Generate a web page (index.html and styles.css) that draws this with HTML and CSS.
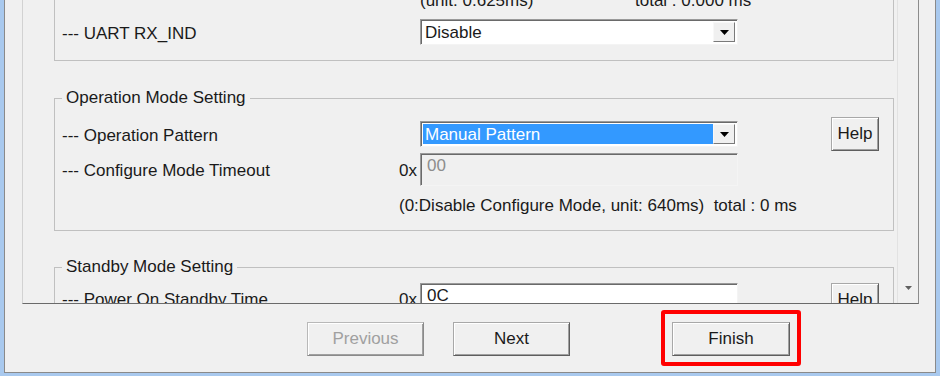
FILE: index.html
```html
<!DOCTYPE html>
<html lang="en">
<head>
    <meta charset="UTF-8">
    <meta name="viewport" content="width=device-width, initial-scale=1.0">
    <title>Setting Wizard</title>
    <link rel="stylesheet" href="styles.css">
</head>
<body>
    <div class="window">
        <div class="dialog">
            <div class="scroll">
                <div class="scroll-content">
                    <fieldset class="group group-cut">
                        <div class="row row-note">
                            <span class="note"><span class="unit">(unit: 0.625ms)</span>total : 0.000 ms</span>
                        </div>
                        <div class="row row-combo">
                            <span class="label">--- UART RX_IND</span>
                            <div class="combo">
                                <span class="combo-value">Disable</span>
                                <span class="combo-btn"><svg width="9" height="5" viewBox="0 0 9 5"><polygon points="0,0 9,0 4.5,5" fill="#000"/></svg></span>
                            </div>
                        </div>
                    </fieldset>

                    <fieldset class="group">
                        <legend>Operation Mode Setting</legend>
                        <div class="row row-first">
                            <span class="label">--- Operation Pattern</span>
                            <div class="combo">
                                <span class="combo-value selected">Manual Pattern</span>
                                <span class="combo-btn"><svg width="9" height="5" viewBox="0 0 9 5"><polygon points="0,0 9,0 4.5,5" fill="#000"/></svg></span>
                            </div>
                            <button class="btn btn-help">Help</button>
                        </div>
                        <div class="row row-edit">
                            <span class="label">--- Configure Mode Timeout</span>
                            <span class="prefix">0x</span>
                            <div class="edit disabled">00</div>
                        </div>
                        <div class="row row-desc">
                            <span class="desc">(0:Disable Configure Mode, unit: 640ms)&nbsp; total : 0 ms</span>
                        </div>
                    </fieldset>

                    <fieldset class="group group-standby">
                        <legend>Standby Mode Setting</legend>
                        <div class="row row-standby">
                            <span class="label">--- Power On Standby Time</span>
                            <span class="prefix">0x</span>
                            <div class="edit">0C</div>
                            <button class="btn btn-help">Help</button>
                        </div>
                    </fieldset>
                </div>
                <div class="scrollbar">
                    <span class="scroll-arrow"><svg width="7" height="4" viewBox="0 0 7 4"><polygon points="0,0 7,0 3.5,4" fill="#606060"/></svg></span>
                </div>
            </div>

            <div class="button-bar">
                <button class="btn btn-nav" disabled>Previous</button>
                <button class="btn btn-nav btn-next">Next</button>
                <div class="highlight">
                    <button class="btn btn-nav btn-finish">Finish</button>
                </div>
            </div>
        </div>
    </div>
</body>
</html>
```

FILE: styles.css
```css
body {
    margin: 0;
    font-family: "Liberation Sans", Arial, sans-serif;
    font-size: 17px;
    line-height: 18px;
    color: #1a1a1a;
    background: #a9c9ee;
}

.window {
    width: 940px;
    height: 376px;
    box-sizing: border-box;
    border: solid #a9c9ee;
    border-width: 0 4px 3px 4px;
}

.dialog {
    height: 372px;
    background: #f0f0f0;
    border: 1px solid #8a8a8a;
    border-top: none;
}

/* scrolled panel */
.scroll {
    display: flex;
    height: 303px;
    margin: 0 16px 0 17px;
    border-left: 1px solid #d2d2d2;
    border-right: 1px solid #8c8c8c;
    border-bottom: 1px solid #6a6a6a;
    overflow: hidden;
}

.scroll-content {
    flex: 1;
    min-width: 0;
    overflow: hidden;
}

.scrollbar {
    width: 20px;
    border-left: 1px solid #e2e2e2;
    display: flex;
    align-items: flex-end;
    justify-content: center;
}

.scroll-arrow {
    display: flex;
    height: 20px;
    padding-top: 3px;
    box-sizing: border-box;
}

/* group boxes */
.group {
    margin: 28px 3px 0 31px;
    padding: 10px 7px 15px 7px;
    border: 1px solid #c0c0c0;
    min-width: 0;
}

.group legend {
    padding: 0 4px;
    line-height: 18px;
}

.group-cut {
    margin-top: 0;
    padding-top: 0;
    border-top: none;
}

.group-standby {
    margin-top: 27px;
    padding-top: 7px;
}

.row {
    display: grid;
    grid-template-columns: 337px 21px 318px 93px 48px;
    align-items: center;
}

.label {
    grid-column: 1;
    padding-top: 3px;
}

.prefix {
    grid-column: 2;
    padding-top: 3px;
}

.row-note {
    margin-top: -8px;
}

.note {
    grid-column: 3 / -1;
}

.unit {
    display: inline-block;
    width: 215px;
}

.row-combo {
    margin-top: 9px;
}

.row-first {
    height: 34px;
}

.row-edit {
    margin-top: 2px;
}

.row-desc {
    margin-top: 11px;
}

.desc {
    grid-column: 2 / -1;
}

.row-standby {
    align-items: start;
}

.row-standby .label,
.row-standby .prefix {
    padding-top: 8px;
}

/* combo box */
.combo {
    grid-column: 3;
    display: flex;
    height: 26px;
    box-sizing: border-box;
    padding: 2px;
    background: #fff;
    border: 1px solid;
    border-color: #9a9a9a #f4f4f4 #f4f4f4 #9a9a9a;
    box-shadow: inset 1px 1px #6a6a6a;
}

.combo-value {
    flex: 1;
    padding: 1px 2px 0;
    line-height: 19px;
}

.combo-value.selected {
    background: #3399ff;
    color: #fff;
}

.combo-btn {
    width: 20px;
    display: flex;
    align-items: center;
    justify-content: center;
    background: #f0f0f0;
    border: 1px solid;
    border-color: #f8f8f8 #7a7a7a #7a7a7a #f8f8f8;
}

/* edit box */
.edit {
    grid-column: 3;
    height: 33px;
    box-sizing: border-box;
    padding: 3px 6px 0;
    background: #fff;
    border: 1px solid;
    border-color: #9a9a9a #f4f4f4 #f4f4f4 #9a9a9a;
    box-shadow: inset 1px 1px #6a6a6a;
}

.edit.disabled {
    background: #f0f0f0;
    color: #8d8d8d;
}

/* buttons */
.btn {
    font-family: inherit;
    font-size: 17px;
    color: #1a1a1a;
    background: #f0f0f0;
    border: 1px solid;
    border-color: #a8a8a8 #5e5e5e #5e5e5e #a8a8a8;
    box-shadow: inset 1px 1px #fff, inset -1px -1px #a0a0a0;
    padding: 0;
    border-radius: 0;
}

.btn:disabled {
    color: #a0a0a0;
    border-color: #b8b8b8 #8a8a8a #8a8a8a #b8b8b8;
}

.btn-help {
    grid-column: 5;
    width: 48px;
    height: 34px;
}

.button-bar {
    display: flex;
    align-items: flex-start;
    padding: 6px 0 0 302px;
}

.btn-nav {
    width: 117px;
    height: 34px;
    margin-top: 12px;
}

.btn-next {
    margin-left: 29px;
}

.highlight {
    margin-left: 91px;
    padding: 8px 7px 6px 7px;
    border: 4px solid #ff0000;
    border-radius: 3px;
}

.btn-finish {
    width: 118px;
    margin-top: 0;
}
```
